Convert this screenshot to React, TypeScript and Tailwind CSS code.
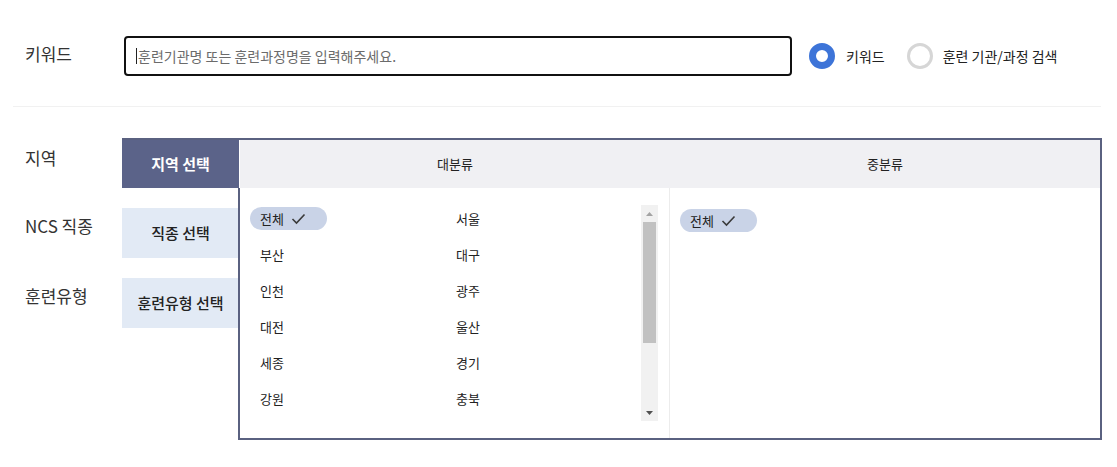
import React from "react";

const font = { fontFamily: '"Noto Sans CJK KR", "Noto Sans", sans-serif' };

function Check() {
  return (
    <svg width="15" height="12" viewBox="0 0 15 12" className="ml-[7px]">
      <polyline points="1.5,6 5.5,10 13.5,1.5" fill="none" stroke="#3a3a3a" strokeWidth="1.6" />
    </svg>
  );
}

function Pill() {
  return (
    <div className="inline-flex items-center h-[23px] w-[77px] rounded-full bg-[#c9d3e7] pl-[10px] text-[13px] text-[#222]">
      전체
      <Check />
    </div>
  );
}

const left = ["부산", "인천", "대전", "세종", "강원"];
const right = ["서울", "대구", "광주", "울산", "경기", "충북"];

export default function App() {
  return (
    <div className="w-[1117px] h-[467px] bg-white text-[#333] overflow-hidden" style={font}>
      {/* keyword row */}
      <div className="flex items-center pt-[36px]">
        <div className="w-[124px] pl-[25px] text-[17px] text-[#333] -mt-[4px]">키워드</div>
        <div className="flex items-center w-[668px] h-[40px] border-2 border-[#111] rounded-[4px] pl-[10px]">
          <span className="w-px h-[16px] bg-[#222] mr-[1px]" />
          <span className="text-[14px] text-[#6b6b6b]">훈련기관명 또는 훈련과정명을 입력해주세요.</span>
        </div>
        <div className="flex items-center ml-[17px]">
          <span className="w-[26px] h-[26px] rounded-full border-[7px] border-[#3d74d8] bg-white" />
          <span className="ml-[11px] text-[14px] text-[#222]">키워드</span>
          <span className="ml-[22px] w-[26px] h-[26px] rounded-full border-[3px] border-[#d6d6d6] bg-white" />
          <span className="ml-[10px] text-[14px] text-[#222]">훈련 기관/과정 검색</span>
        </div>
      </div>
      <div className="ml-[13px] w-[1088px] h-px bg-[#f1f1f1] mt-[30px]" />

      {/* filter area */}
      <div className="flex mt-[31px]">
        <div className="flex flex-col gap-[20px] w-[240px] shrink-0">
          <div className="flex">
            <div className="w-[122px] pl-[25px] pt-[7px] text-[17px]">지역</div>
            <div className="w-[117px] h-[50px] bg-[#5b6389] text-white text-[15px] font-semibold flex items-center justify-center border-t-2 border-[#5a6180]">
              지역 선택
            </div>
          </div>
          <div className="flex">
            <div className="w-[122px] pl-[25px] pt-[5px] text-[17px]">NCS 직종</div>
            <div className="w-[117px] h-[50px] bg-[#e2eaf5] text-[#222] text-[15px] font-medium flex items-center justify-center">
              직종 선택
            </div>
          </div>
          <div className="flex">
            <div className="w-[122px] pl-[25px] pt-[5px] text-[17px]">훈련유형</div>
            <div className="w-[117px] h-[50px] bg-[#e2eaf5] text-[#222] text-[15px] font-medium flex items-center justify-center">
              훈련유형 선택
            </div>
          </div>
        </div>

        {/* dropdown panel */}
        <div className="w-[864px] h-[302px] border-t-2 border-r-2 border-b-2 border-[#5a6180] flex flex-col -ml-[2px]">
          <div className="flex h-[48px] bg-[#f0f0f3] text-[13px] text-[#222] ml-[2px]">
            <div className="w-[430px] flex items-center justify-center">대분류</div>
            <div className="flex-1 flex items-center justify-center">중분류</div>
          </div>
          <div className="flex flex-1 border-l-2 border-[#5a6180]">
            <div className="w-[430px] flex border-r border-[#ececec]">
              <div className="flex-1 grid grid-cols-[206px_1fr] content-start gap-y-[13px] pl-[10px] pt-[19px] text-[13px] text-[#222]">
                <div><Pill /></div>
                <div className="h-[23px] flex items-center">{right[0]}</div>
                {left.map((l, i) => (
                  <React.Fragment key={l}>
                    <div className="h-[23px] flex items-center pl-[10px]">{l}</div>
                    <div className="h-[23px] flex items-center">{right[i + 1]}</div>
                  </React.Fragment>
                ))}
              </div>
              <div className="w-[17px] h-[216px] mt-[17px] mr-[11px] bg-[#f1f1f1] flex flex-col items-center">
                <div className="h-[17px] flex items-center justify-center">
                  <svg width="7" height="4" viewBox="0 0 7 4"><polygon points="0,4 7,4 3.5,0" fill="#a3a3a3" /></svg>
                </div>
                <div className="w-[13px] h-[121px] bg-[#c1c1c1]" />
                <div className="flex-1" />
                <div className="h-[17px] flex items-center justify-center">
                  <svg width="7" height="4" viewBox="0 0 7 4"><polygon points="0,0 7,0 3.5,4" fill="#505050" /></svg>
                </div>
              </div>
            </div>
            <div className="flex-1 pl-[10px] pt-[19px]">
              <Pill />
            </div>
          </div>
        </div>
      </div>
    </div>
  );
}
